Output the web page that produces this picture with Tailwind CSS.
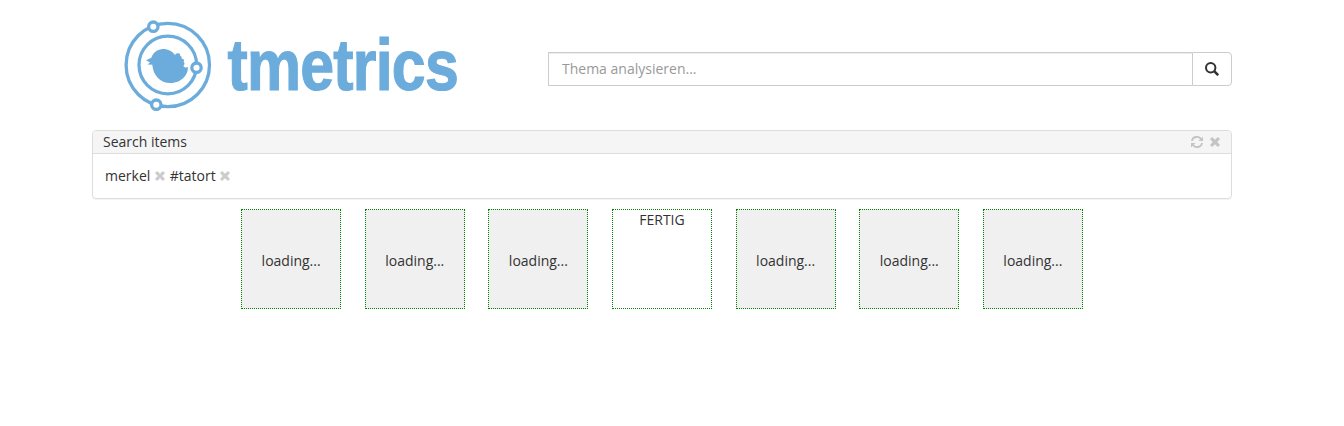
<!DOCTYPE html>
<html lang="de">
<head>
<meta charset="utf-8">
<title>tmetrics</title>
<script src="https://cdn.jsdelivr.net/npm/@tailwindcss/browser@4"></script>
</head>
<body class="bg-white font-['Open_Sans',sans-serif] text-sm leading-5 text-[#333]">
<svg class="hidden">
  <symbol id="remove" viewBox="0 0 11 11"><path d="M2.3 0 5.5 2.9 8.7 0 11 2.3 8 5.5 11 8.7 8.7 11 5.5 8.1 2.3 11 0 8.7 3 5.5 0 2.3Z" fill="currentColor"/></symbol>
</svg>
<div class="ml-[92px] w-[1140px]">
  <header class="flex h-[130px] items-start">
    <svg class="h-[130px] w-[456px] shrink-0" viewBox="92 0 456 130" fill="none" stroke="#6cacdc" stroke-width="3.300">
      <circle cx="167.800" cy="65" r="41.700"/>
      <circle cx="167.800" cy="65" r="28.800"/>
      <g fill="#fff"><circle cx="153.300" cy="26.700" r="4.700"/><circle cx="196.500" cy="67.700" r="4.700"/><circle cx="156.300" cy="104.700" r="4.700"/></g>
      <path stroke="none" fill="#6cacdc" d="M146 60.200 151.300 57.800C153 52.800 157.500 49 163 49C168.500 49 172.500 51.500 175 55C176 53.500 177 52.900 178.300 53.200C180 53.500 180.500 54.500 180.200 56C181.800 56.500 182 57.500 181.700 58.800C184 59 184.800 60.500 183.500 61.700C184.800 62.500 185 64.500 183.300 66C185.300 68 186.500 67.800 187.700 66.700C189 73 182.500 83 170.500 83C160 83 153 75 152.300 64.700L147.500 64.600 150 62.400Z"/>
      <text transform="translate(227.500 89.500) scale(.85 1)" font-family="Liberation Sans" font-weight="700" font-size="71.500" textLength="272" fill="#6cacdc" stroke-width="1.200">tmetrics</text>
    </svg>
    <div class="mt-[52px] flex h-[34px] w-[684px]">
      <input class="h-[34px] w-[645px] border border-r-0 border-[#ccc] px-[13px] pb-[2px] shadow-[inset_0_1px_1px_rgba(0,0,0,0.075)] placeholder:text-[#999]" placeholder="Thema analysieren...">
      <button class="flex w-[40px] items-center justify-center rounded-r border border-[#ccc] pb-px" aria-label="Suchen">
        <svg class="size-[14px]" viewBox="0 0 14 14" fill="none" stroke="#333"><circle cx="5.700" cy="5.700" r="4.700" stroke-width="2"/><path d="m9.200 9.200 4 4" stroke-width="2.600"/></svg>
      </button>
    </div>
  </header>
  <section class="h-[69px] rounded border border-[#ddd] shadow-[0_1px_1px_rgba(0,0,0,0.05)]">
    <div class="flex h-[23px] items-center justify-between rounded-t-[3px] border-b border-[#ddd] bg-[#f5f5f5] pr-[11px] pl-[10px]">
      <h3>Search items</h3>
      <div class="flex items-center gap-[7px] text-[#c4c4c4]">
        <svg class="size-3" viewBox="0 0 12 12" fill="none" stroke="currentColor" stroke-width="1.800"><path d="M1 5C1.500 .5 7.500-.5 10 3M11 7C10.500 11.500 4.500 12.500 2 9"/><path d="M12 .5V5H7.500ZM0 11.500V7H4.500Z" fill="currentColor" stroke="none"/></svg>
        <svg class="size-[10px]"><use href="#remove"/></svg>
      </div>
    </div>
    <div class="flex items-center pt-[12px] pl-[12px]">
      <span>merkel</span><svg class="mr-[4.500px] ml-[5px] size-[10px] text-[#ccc]"><use href="#remove"/></svg>
      <span>#tatort</span><svg class="ml-[4.500px] size-[10px] text-[#ccc]"><use href="#remove"/></svg>
    </div>
  </section>
  <main class="mt-[10px] flex justify-center gap-[23.640px] text-center">
    <div class="size-[100px] border border-dotted border-[#008000] bg-[#f0f0f0] pt-[41px]">loading...</div>
    <div class="size-[100px] border border-dotted border-[#008000] bg-[#f0f0f0] pt-[41px]">loading...</div>
    <div class="size-[100px] border border-dotted border-[#008000] bg-[#f0f0f0] pt-[41px]">loading...</div>
    <div class="size-[100px] border border-dotted border-[#008000]">FERTIG</div>
    <div class="size-[100px] border border-dotted border-[#008000] bg-[#f0f0f0] pt-[41px]">loading...</div>
    <div class="size-[100px] border border-dotted border-[#008000] bg-[#f0f0f0] pt-[41px]">loading...</div>
    <div class="size-[100px] border border-dotted border-[#008000] bg-[#f0f0f0] pt-[41px]">loading...</div>
  </main>
</div>
</body>
</html>
